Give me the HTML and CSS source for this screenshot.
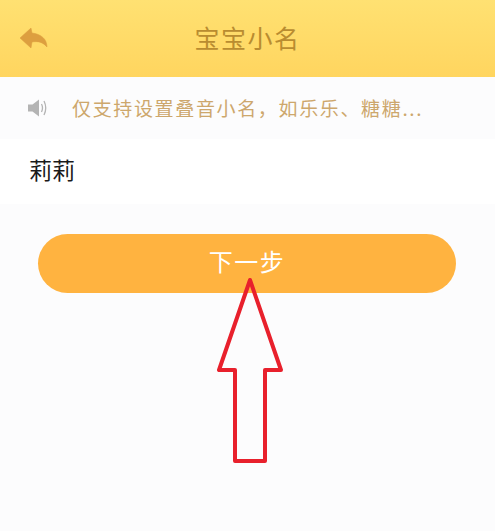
FILE: index.html
```html
<!DOCTYPE html>
<html>
<head>
<meta charset="utf-8">
<link rel="stylesheet" href="styles.css">
</head>
<body>
  <div class="page">
    <div class="header">
      <svg class="back-icon" width="30" height="24" viewBox="0 0 30 24">
        <path d="M1 11 L12 1 L13 6 C22 7 28 12 28 20 C24 15 19 14 13 15 L12 21 Z" fill="#dd9f3f" stroke="#dd9f3f" stroke-width="0.500" stroke-linejoin="round"/>
      </svg>
      <div class="title">宝宝小名</div>
    </div>
    <div class="notice">
      <svg class="sound-icon" width="21" height="20" viewBox="0 0 21 20">
        <path d="M1 6.500 H5.500 L12 1.500 V18.500 L5.500 13.500 H1 Z" fill="#b4b4b4"/>
        <path d="M14.500 6 Q16.500 10 14.500 14 M17 3 Q20.500 10 17 17" fill="none" stroke="#b4b4b4" stroke-width="1.300"/>
      </svg>
      <span class="notice-text">仅支持设置叠音小名，如乐乐、糖糖...</span>
    </div>
    <div class="name-row">莉莉</div>
    <div class="next-btn">下一步</div>
    <svg class="arrow" width="70" height="190" viewBox="0 0 70 190">
      <path d="M34 4 L3 94 H19 V185 H49 V94 H65 Z" fill="none" stroke="#e8202c" stroke-width="4" stroke-linejoin="round"/>
    </svg>
  </div>
</body>
</html>
```
FILE: styles.css
```css
html, body {
  margin: 0;
  padding: 0;
}

body {
  background-color: #fcfcfd;
  font-family: "Noto Sans CJK SC", "Noto Sans", sans-serif;
}

.page {
  position: relative;
  height: 531px;
  overflow: hidden;
}

.header {
  height: 77px;
  display: flex;
  align-items: center;
  justify-content: center;
  position: relative;
  background: linear-gradient(#ffe172, #ffd55f);
}

.back-icon {
  position: absolute;
  left: 19px;
  top: 27px;
}

.title {
  font-size: 25px;
  letter-spacing: 1.500px;
  color: #b98c30;
  padding-bottom: 4px;
}

.notice {
  height: 62px;
  display: flex;
  align-items: center;
  padding-left: 27px;
  background-color: #fcfcfd;
}

.sound-icon {
  margin-right: 24px;
}

.notice-text {
  font-size: 19px;
  letter-spacing: 1.650px;
  color: #cda76c;
  white-space: nowrap;
  padding-bottom: 2px;
}

.name-row {
  height: 65px;
  line-height: 61px;
  padding-left: 29px;
  background-color: #fff;
  font-size: 23px;
  color: #1a1a1a;
}

.next-btn {
  margin: 30px 39px 0 38px;
  height: 59px;
  line-height: 54px;
  border-radius: 30px;
  background-color: #ffb340;
  color: #fff;
  font-size: 24px;
  letter-spacing: 1.500px;
  text-align: center;
}

.arrow {
  position: absolute;
  left: 216px;
  top: 276px;
}
```
